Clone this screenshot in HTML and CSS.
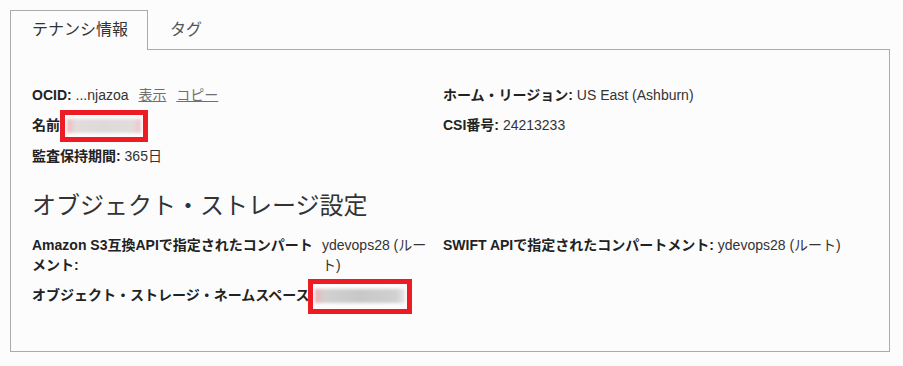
FILE: index.html
```html
<!DOCTYPE html>
<html lang="ja">

<head>
    <meta charset="UTF-8">
    <meta name="viewport" content="width=device-width, initial-scale=1.0">
    <title>テナンシ詳細</title>
    <link rel="stylesheet" href="styles.css">
</head>

<body>
    <div class="page">
        <!-- tabs -->
        <div class="tabs">
            <div class="tab active">テナンシ情報</div>
            <div class="tab">タグ</div>
        </div>

        <div class="panel">
            <div class="details">
                <div class="col">
                    <div class="item">
                        <span class="label">OCID:</span>
                        <span class="value">...njazoa</span>
                        <a class="link" href="#">表示</a>
                        <a class="link" href="#">コピー</a>
                    </div>
                    <div class="item">
                        <span class="label">名前</span><span class="redact redact-name"><span class="blur"></span></span>
                    </div>
                    <div class="item">
                        <span class="label">監査保持期間:</span>
                        <span class="value">365日</span>
                    </div>
                </div>
                <div class="col">
                    <div class="item">
                        <span class="label">ホーム・リージョン:</span>
                        <span class="value">US East (Ashburn)</span>
                    </div>
                    <div class="item">
                        <span class="label">CSI番号:</span>
                        <span class="value">24213233</span>
                    </div>
                </div>
            </div>

            <h2>オブジェクト・ストレージ設定</h2>

            <div class="details">
                <div class="col">
                    <div class="item item-split">
                        <span class="label">Amazon S3互換APIで指定されたコンパートメント:</span>
                        <span class="value">ydevops28 (ルート)</span>
                    </div>
                    <div class="item">
                        <span class="label">オブジェクト・ストレージ・ネームスペース</span><span class="redact redact-ns"><span class="blur"></span></span>
                    </div>
                </div>
                <div class="col">
                    <div class="item">
                        <span class="label">SWIFT APIで指定されたコンパートメント:</span>
                        <span class="value">ydevops28 (ルート)</span>
                    </div>
                </div>
            </div>
        </div>
    </div>
</body>

</html>
```

FILE: styles.css
```css
body {
    font-family: 'Liberation Sans', 'Noto Sans CJK JP', sans-serif;
    margin: 0;
    padding: 0;
    background-color: #fcfcfc;
    color: #333;
}

.page {
    padding: 10px;
    width: 880px;
}

/* tabs */
.tabs {
    display: flex;
}

.tab {
    height: 38px;
    line-height: 38px;
    padding: 0 20px 0 21px;
    font-size: 16px;
    color: #555;
    border: 1px solid transparent;
    border-bottom: none;
}

.tab.active {
    position: relative;
    color: #333;
    border-color: #aaa;
    background-color: #fcfcfc;
    height: 39px;
    margin-bottom: -1px;
    padding-right: 19px;
}

.panel {
    border: 1px solid #aaa;
    padding: 35px 21px 34px;
}

/* details */
.details {
    display: grid;
    grid-template-columns: 411px 1fr;
}

.item {
    font-size: 14px;
    line-height: 20px;
    margin-bottom: 10px;
    color: #333;
}

.label {
    font-weight: bold;
    color: #222;
}

.link {
    color: #707070;
    text-decoration: underline;
    margin-left: 6px;
}

.item-split {
    display: flex;
    gap: 4px;
}

.item-split .label {
    width: 286px;
}

.item-split .value {
    width: 110px;
}

h2 {
    font-size: 24px;
    font-weight: normal;
    line-height: 32px;
    margin: 14px 0 13px;
    color: #333;
}

/* red boxes over hidden values */
.redact {
    display: inline-flex;
    align-items: center;
    box-sizing: border-box;
    border: 5px solid #ed1c24;
    vertical-align: middle;
    padding: 0 2px;
    overflow: hidden;
}

.redact-name {
    width: 88px;
    height: 32px;
    margin: -6px 0;
}

.redact-ns {
    width: 104px;
    height: 35px;
    margin: -8px 0 -7px -2px;
}

.blur {
    display: block;
    width: 100%;
    height: 14px;
    filter: blur(1.5px);
}

.redact-name .blur {
    background: linear-gradient(to right, #f2b8bd, #e2dcdc 12%, #dedada 50%, #e2dcdc 88%, #f2c4c8);
}

.redact-ns .blur {
    background: linear-gradient(to right, #f0b0b5, #d2d0d0 10%, #c8c8c8 50%, #d0d0d0 90%, #e8e8e8);
}
```
